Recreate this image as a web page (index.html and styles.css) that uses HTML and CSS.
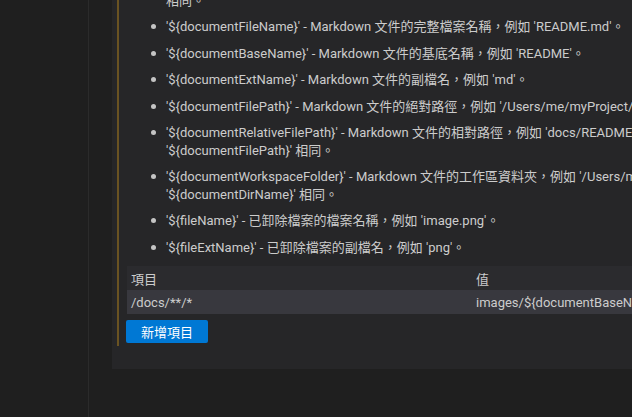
FILE: index.html
```html
<!DOCTYPE html>
<html lang="zh-Hant">
<head>
<meta charset="utf-8">
<title>設定</title>
<link rel="stylesheet" href="styles.css">
</head>
<body>
<div class="layout">
  <div class="sidebar"></div>
  <div class="gutter"></div>
  <div class="panel">
    <div class="setting">
      <ul class="desc">
        <li><span>'${documentRelativeDirName}' - Markdown 文件的相對父目錄路徑，例如 'docs'。如果檔案不屬於工作區的一部分，這與 '${documentDirName}'<br>相同。</span></li>
        <li><span>'${documentFileName}' - Markdown 文件的完整檔案名稱，例如 'README.md'。</span></li>
        <li><span>'${documentBaseName}' - Markdown 文件的基底名稱，例如 'README'。</span></li>
        <li><span>'${documentExtName}' - Markdown 文件的副檔名，例如 'md'。</span></li>
        <li><span>'${documentFilePath}' - Markdown 文件的絕對路徑，例如 '/Users/me/myProject/docs/README.md'。</span></li>
        <li><span>'${documentRelativeFilePath}' - Markdown 文件的相對路徑，例如 'docs/README.md'。如果檔案不屬於工作區的一部分，這與<br>'${documentFilePath}' 相同。</span></li>
        <li><span>'${documentWorkspaceFolder}' - Markdown 文件的工作區資料夾，例如 '/Users/me/myProject'。如果檔案不屬於工作區的一部分，這與<br>'${documentDirName}' 相同。</span></li>
        <li><span>'${fileName}' - 已卸除檔案的檔案名稱，例如 'image.png'。</span></li>
        <li><span>'${fileExtName}' - 已卸除檔案的副檔名，例如 'png'。</span></li>
      </ul>
      <div class="table">
        <div class="row head">
          <div class="cell key">項目</div>
          <div class="cell val">值</div>
        </div>
        <div class="row item">
          <div class="cell key">/docs/**/*</div>
          <div class="cell val">images/${documentBaseName}/${fileName}</div>
        </div>
      </div>
      <button class="add">新增項目</button>
    </div>
  </div>
</div>
</body>
</html>
```
FILE: styles.css
```css
html, body {
  margin: 0;
  padding: 0;
  background: #1f1f1f;
  overflow: hidden;
  width: 632px;
  height: 417px;
}
body {
  font-family: Roboto, "Noto Sans CJK TC", sans-serif;
  font-size: 13px;
  color: #cccccc;
}
.layout {
  display: flex;
  height: 417px;
}
.sidebar {
  width: 88px;
  flex: none;
  border-right: 1px solid #2b2b2b;
}
.gutter {
  width: 23px;
  flex: none;
}
.panel {
  flex: none;
  width: 760px;
  height: 369px;
  background: #262628;
  padding-left: 5px;
  box-sizing: border-box;
  overflow: hidden;
}
.setting {
  margin-top: -26px;
  border-left: 2px solid #6a5322;
  padding: 0 0 3px 8px;
}
.desc {
  list-style: none;
  margin: 0 0 10px 0;
  padding: 0 0 0 24px;
}
.desc li {
  display: flex;
  align-items: flex-start;
  line-height: 17.5px;
  margin-bottom: 9px;
  white-space: nowrap;
}
.desc li:last-child {
  margin-bottom: 0;
}
.desc li::before {
  content: "";
  flex: none;
  width: 5px;
  height: 5px;
  border-radius: 50%;
  background: #c4c4c4;
  margin: 6px 10px 0 0;
}
.table {
  display: flex;
  flex-direction: column;
}
.row {
  display: flex;
  height: 24px;
  align-items: center;
}
.head {
  background: #2b2b2e;
}
.item {
  background: #38383e;
}
.cell {
  padding-left: 4px;
  white-space: nowrap;
}
.key {
  width: 341px;
}
.add {
  margin: 6px 0 0 -1px;
  width: 82px;
  height: 23px;
  border: none;
  border-radius: 2px;
  background: #0078d4;
  color: #ffffff;
  font-family: Roboto, "Noto Sans CJK TC", sans-serif;
  font-size: 13px;
  padding: 0;
  display: block;
}
```
